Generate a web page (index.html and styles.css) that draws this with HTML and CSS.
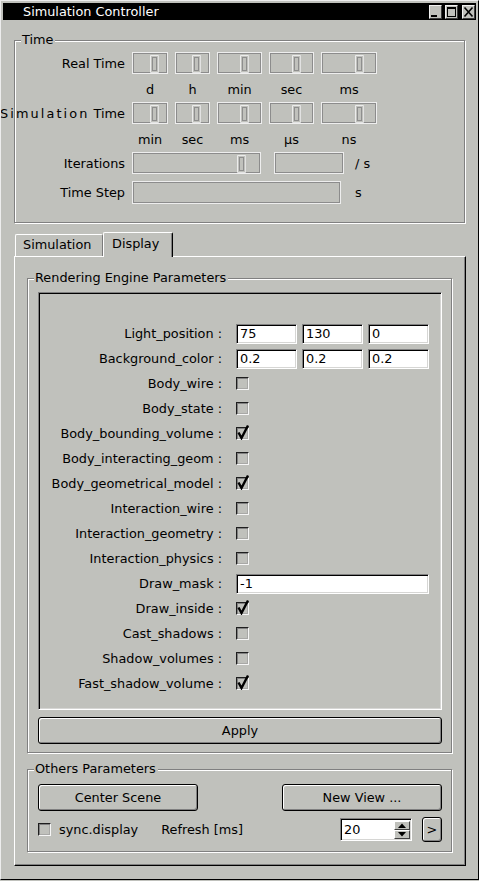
FILE: index.html
```html
<!DOCTYPE html>
<html>
<head>
<meta charset="utf-8">
<title>Simulation Controller</title>
<link rel="stylesheet" href="styles.css">
</head>
<body>
<div class="window">
  <div class="titlebar">
    <span class="title">Simulation Controller</span>
    <span class="wbtn"><svg width="11" height="12" viewBox="0 0 11 12"><rect x="1" y="9" width="6" height="2" fill="#000"/></svg></span>
    <span class="wbtn"><svg width="11" height="12" viewBox="0 0 11 12"><rect x="1.5" y="1.5" width="8" height="9" fill="none" stroke="#000"/><rect x="1" y="1" width="9" height="2" fill="#000"/></svg></span>
    <span class="wbtn"><svg width="11" height="12" viewBox="0 0 11 12"><path d="M1.5 1.5 L9.5 10.5 M9.5 1.5 L1.5 10.5" stroke="#000" stroke-width="1.6"/></svg></span>
  </div>

  <div class="client">
    <div class="group time">
      <span class="gtitle">Time</span>

      <div class="trow">
        <span class="tlabel">Real Time</span>
        <span class="lcd w36"><svg class="dg" width="9" height="18" viewBox="0 0 9 18"><path d="M0.5 17.5 V0.5 H8.5" fill="none" stroke="#ececec"/><path d="M8.5 0.5 V17.5 H0.5" fill="none" stroke="#e2e2e2"/><rect x="2.5" y="2.5" width="4" height="13" fill="none" stroke="#8e8e8e"/></svg></span>
        <span class="lcd w35"><svg class="dg" width="9" height="18" viewBox="0 0 9 18"><path d="M0.5 17.5 V0.5 H8.5" fill="none" stroke="#ececec"/><path d="M8.5 0.5 V17.5 H0.5" fill="none" stroke="#e2e2e2"/><rect x="2.5" y="2.5" width="4" height="13" fill="none" stroke="#8e8e8e"/></svg></span>
        <span class="lcd w45"><svg class="dg" width="9" height="18" viewBox="0 0 9 18"><path d="M0.5 17.5 V0.5 H8.5" fill="none" stroke="#ececec"/><path d="M8.5 0.5 V17.5 H0.5" fill="none" stroke="#e2e2e2"/><rect x="2.5" y="2.5" width="4" height="13" fill="none" stroke="#8e8e8e"/></svg></span>
        <span class="lcd w45"><svg class="dg" width="9" height="18" viewBox="0 0 9 18"><path d="M0.5 17.5 V0.5 H8.5" fill="none" stroke="#ececec"/><path d="M8.5 0.5 V17.5 H0.5" fill="none" stroke="#e2e2e2"/><rect x="2.5" y="2.5" width="4" height="13" fill="none" stroke="#8e8e8e"/></svg></span>
        <span class="lcd w56"><svg class="dg" width="9" height="18" viewBox="0 0 9 18"><path d="M0.5 17.5 V0.5 H8.5" fill="none" stroke="#ececec"/><path d="M8.5 0.5 V17.5 H0.5" fill="none" stroke="#e2e2e2"/><rect x="2.5" y="2.5" width="4" height="13" fill="none" stroke="#8e8e8e"/></svg></span>
      </div>
      <div class="urow">
        <span class="u w36">d</span><span class="u w35">h</span><span class="u w45">min</span><span class="u w45">sec</span><span class="u w56">ms</span>
      </div>

      <div class="trow">
        <span class="tlabel"><span class="spaced">Simulation</span>&nbsp;Time</span>
        <span class="lcd w36"><svg class="dg" width="9" height="18" viewBox="0 0 9 18"><path d="M0.5 17.5 V0.5 H8.5" fill="none" stroke="#ececec"/><path d="M8.5 0.5 V17.5 H0.5" fill="none" stroke="#e2e2e2"/><rect x="2.5" y="2.5" width="4" height="13" fill="none" stroke="#8e8e8e"/></svg></span>
        <span class="lcd w35"><svg class="dg" width="9" height="18" viewBox="0 0 9 18"><path d="M0.5 17.5 V0.5 H8.5" fill="none" stroke="#ececec"/><path d="M8.5 0.5 V17.5 H0.5" fill="none" stroke="#e2e2e2"/><rect x="2.5" y="2.5" width="4" height="13" fill="none" stroke="#8e8e8e"/></svg></span>
        <span class="lcd w45"><svg class="dg" width="9" height="18" viewBox="0 0 9 18"><path d="M0.5 17.5 V0.5 H8.5" fill="none" stroke="#ececec"/><path d="M8.5 0.5 V17.5 H0.5" fill="none" stroke="#e2e2e2"/><rect x="2.5" y="2.5" width="4" height="13" fill="none" stroke="#8e8e8e"/></svg></span>
        <span class="lcd w45"><svg class="dg" width="9" height="18" viewBox="0 0 9 18"><path d="M0.5 17.5 V0.5 H8.5" fill="none" stroke="#ececec"/><path d="M8.5 0.5 V17.5 H0.5" fill="none" stroke="#e2e2e2"/><rect x="2.5" y="2.5" width="4" height="13" fill="none" stroke="#8e8e8e"/></svg></span>
        <span class="lcd w56"><svg class="dg" width="9" height="18" viewBox="0 0 9 18"><path d="M0.5 17.5 V0.5 H8.5" fill="none" stroke="#ececec"/><path d="M8.5 0.5 V17.5 H0.5" fill="none" stroke="#e2e2e2"/><rect x="2.5" y="2.5" width="4" height="13" fill="none" stroke="#8e8e8e"/></svg></span>
      </div>
      <div class="urow">
        <span class="u w36">min</span><span class="u w35">sec</span><span class="u w45">ms</span><span class="u w45">µs</span><span class="u w56">ns</span>
      </div>

      <div class="trow iter">
        <span class="tlabel">Iterations</span>
        <span class="lcd w129"><svg class="dg" width="9" height="18" viewBox="0 0 9 18"><path d="M0.5 17.5 V0.5 H8.5" fill="none" stroke="#ececec"/><path d="M8.5 0.5 V17.5 H0.5" fill="none" stroke="#e2e2e2"/><rect x="2.5" y="2.5" width="4" height="13" fill="none" stroke="#8e8e8e"/></svg></span>
        <span class="lcd w70"></span>
        <span class="unit-after">/ s</span>
      </div>
      <div class="trow step">
        <span class="tlabel">Time Step</span>
        <span class="lcd w209"></span>
        <span class="unit-after s">s</span>
      </div>
    </div>

    <div class="tabs">
      <div class="tabbar">
        <div class="tab">Simulation</div>
        <div class="tab sel">Display</div>
      </div>
      <div class="panel">
        <div class="group render">
          <span class="gtitle">Rendering Engine Parameters</span>
          <div class="scroll">
            <div class="prow"><span class="plabel">Light_position :</span><span class="field">75</span><span class="field">130</span><span class="field">0</span></div>
            <div class="prow"><span class="plabel">Background_color :</span><span class="field">0.2</span><span class="field">0.2</span><span class="field">0.2</span></div>
            <div class="prow"><span class="plabel">Body_wire :</span><span class="cb"></span></div>
            <div class="prow"><span class="plabel">Body_state :</span><span class="cb"></span></div>
            <div class="prow"><span class="plabel">Body_bounding_volume :</span><span class="cb on"><svg class="tick" width="14" height="16" viewBox="0 0 14 16"><path d="M2.5 8.5 L5.5 14 L12 1.5" fill="none" stroke="#000" stroke-width="2.4"/></svg></span></div>
            <div class="prow"><span class="plabel">Body_interacting_geom :</span><span class="cb"></span></div>
            <div class="prow"><span class="plabel">Body_geometrical_model :</span><span class="cb on"><svg class="tick" width="14" height="16" viewBox="0 0 14 16"><path d="M2.5 8.5 L5.5 14 L12 1.5" fill="none" stroke="#000" stroke-width="2.4"/></svg></span></div>
            <div class="prow"><span class="plabel">Interaction_wire :</span><span class="cb"></span></div>
            <div class="prow"><span class="plabel">Interaction_geometry :</span><span class="cb"></span></div>
            <div class="prow"><span class="plabel">Interaction_physics :</span><span class="cb"></span></div>
            <div class="prow"><span class="plabel">Draw_mask :</span><span class="field wide">-1</span></div>
            <div class="prow"><span class="plabel">Draw_inside :</span><span class="cb on"><svg class="tick" width="14" height="16" viewBox="0 0 14 16"><path d="M2.5 8.5 L5.5 14 L12 1.5" fill="none" stroke="#000" stroke-width="2.4"/></svg></span></div>
            <div class="prow"><span class="plabel">Cast_shadows :</span><span class="cb"></span></div>
            <div class="prow"><span class="plabel">Shadow_volumes :</span><span class="cb"></span></div>
            <div class="prow"><span class="plabel">Fast_shadow_volume :</span><span class="cb on"><svg class="tick" width="14" height="16" viewBox="0 0 14 16"><path d="M2.5 8.5 L5.5 14 L12 1.5" fill="none" stroke="#000" stroke-width="2.4"/></svg></span></div>
          </div>
          <div class="btn apply">Apply</div>
        </div>

        <div class="group others">
          <span class="gtitle">Others Parameters</span>
          <div class="orow">
            <div class="btn wide-btn">Center Scene</div>
            <div class="btn wide-btn">New View ...</div>
          </div>
          <div class="orow second">
            <span class="cb"></span>
            <span class="sync">sync.display</span>
            <span class="refresh">Refresh [ms]</span>
            <span class="spin">
              <span class="spin-val">20</span>
              <span class="spin-btns">
                <span class="sb"><svg width="10" height="7" viewBox="0 0 10 7"><path d="M1 6 L5 1.5 L9 6 Z" fill="#000"/></svg></span>
                <span class="sb"><svg width="10" height="7" viewBox="0 0 10 7"><path d="M1 1 L5 5.5 L9 1 Z" fill="#000"/></svg></span>
              </span>
            </span>
            <div class="btn small">&gt;</div>
          </div>
        </div>
      </div>
    </div>
  </div>
</div>
</body>
</html>
```

FILE: styles.css
```css
* { box-sizing: border-box; }

html, body {
  margin: 0;
  padding: 0;
  background: #c0c1bc;
}

body {
  font-family: "DejaVu Sans", "Noto Sans", sans-serif;
  font-size: 12.85px;
  color: #000;
}

.window {
  width: 479px;
  height: 880px;
  border: 1px solid;
  border-color: #ededed #000 #000 #ededed;
  padding: 2px 2px 0 2px;
  background: #c0c1bc;
  overflow: hidden;
}

/* ---------- title bar ---------- */
.titlebar {
  height: 17px;
  background: #000;
  color: #fff;
  display: flex;
  align-items: center;
  padding-left: 20px;
  padding-right: 1px;
}
.title {
  flex: 1;
  line-height: 17px;
}
.wbtn {
  width: 13px;
  height: 14px;
  background: #c0c1bc;
  border: 1px solid;
  border-color: #f2f2f2 #3a3a3a #3a3a3a #f2f2f2;
  display: flex;
  margin-left: 3px;
}
.wbtn:last-child { margin-left: 4px; }
.wbtn svg { display: block; }

/* ---------- client ---------- */
.client {
  padding-left: 11px;
  padding-top: 20px;
}

.group {
  position: relative;
  border: 1px solid #808080;
  box-shadow: 1px 1px 0 #fff, inset 1px 1px 0 #fff;
}
.gtitle {
  position: absolute;
  top: -8px;
  left: 6px;
  padding: 0 2px 0 1px;
  line-height: 14px;
  background: #c0c1bc;
  white-space: nowrap;
}

/* ---------- time group ---------- */
.time {
  width: 451px;
  padding: 11px 0 18px 0;
}
.trow {
  display: flex;
  align-items: center;
  height: 22px;
}
.trow.iter { margin-bottom: 7px; }
.trow.step { height: 23px; }
.tlabel {
  width: 110px;
  flex: none;
  display: flex;
  justify-content: flex-end;
  white-space: nowrap;
  margin-right: 7px;
}
.spaced { letter-spacing: 2.1px; }
.lcd {
  flex: none;
  height: 22px;
  border: 1px solid #eeeeee;
  box-shadow: inset 0 0 0 1px #8c8c8c;
  display: flex;
  align-items: center;
  margin-right: 7px;
}
.trow.step .lcd { height: 23px; }
.lcd .dg { display: block; flex: none; margin-top: 1px; }
.w36 { width: 36px; }
.w35 { width: 35px; }
.w45 { width: 45px; }
.w56 { width: 56px; }
.w129 { width: 129px; margin-right: 13px; }
.w70 { width: 70px; margin-right: 11px; }
.w209 { width: 209px; margin-right: 14px; }
.lcd.w36 .dg { margin-left: 17px; }
.lcd.w35 .dg { margin-left: 16px; }
.lcd.w45 .dg { margin-left: 22px; }
.lcd.w56 .dg { margin-left: 33px; }
.lcd.w129 .dg { margin-left: 104px; }

.urow {
  display: flex;
  height: 28px;
  padding-top: 3px;
  padding-left: 117px;
  align-items: center;
}
.u {
  flex: none;
  text-align: center;
  margin-right: 7px;
}

/* ---------- tabs ---------- */
.tabs { margin-top: 9px; }
.tabbar {
  display: flex;
  align-items: flex-end;
  height: 24px;
  padding-left: 1px;
}
.tab {
  height: 22px;
  width: 88px;
  border-top: 1px solid #fff;
  border-left: 1px solid #fff;
  border-right: 1px solid #7a7a7a;
  border-top-left-radius: 2px;
  border-top-right-radius: 2px;
  padding-left: 7px;
  line-height: 20px;
  white-space: nowrap;
}
.tab.sel {
  position: relative;
  z-index: 1;
  width: 70px;
  height: 25px;
  margin-bottom: -1px;
  padding-left: 8px;
  line-height: 21px;
  border-right: 1px solid #000;
  box-shadow: inset -1px 0 0 #808080;
  background: #c0c1bc;
}

.panel {
  width: 452px;
  height: 610px;
  border-top: 1px solid #fff;
  border-left: 1px solid #fff;
  border-right: 1px solid #000;
  border-bottom: 1px solid #000;
  box-shadow: inset -1px -1px 0 #808080;
  padding: 21px 0 0 12px;
}

/* ---------- rendering group ---------- */
.render {
  width: 425px;
  padding: 13px 0 8px 10px;
}
.scroll {
  width: 404px;
  height: 418px;
  border: 1px solid;
  border-color: #808080 #fff #fff #808080;
  box-shadow: inset 1px 1px 0 #000, inset -1px -1px 0 #d6d6d4;
  padding-top: 28px;
}
.prow {
  display: flex;
  align-items: center;
  height: 25px;
}
.plabel {
  flex: none;
  width: 183px;
  text-align: right;
  white-space: nowrap;
  margin-right: 14px;
}
.field {
  flex: none;
  width: 61px;
  height: 20px;
  margin-right: 5px;
  background: #fff;
  border: 1px solid;
  border-color: #808080 #fff #fff #808080;
  box-shadow: inset 1px 1px 0 #000, inset -1px -1px 0 #d6d6d4;
  padding-left: 3px;
  line-height: 18px;
  white-space: nowrap;
}
.field.wide { width: 193px; }

.cb {
  position: relative;
  flex: none;
  width: 13px;
  height: 13px;
  border: 1px solid;
  border-color: #1e1e1e #f6f6f6 #f6f6f6 #1e1e1e;
  box-shadow: inset 1px 1px 0 #808080, inset -1px -1px 0 #a8a8a6;
  background: #c0c1bc;
}
.cb .tick {
  position: absolute;
  left: -1px;
  top: -4px;
  display: block;
}

.btn {
  border: 1px solid #000;
  border-radius: 3px;
  box-shadow: inset 1px 1px 0 #fff, inset -1px -1px 0 #808080;
  background: #c0c1bc;
  display: flex;
  align-items: center;
  justify-content: center;
  white-space: nowrap;
}
.apply {
  width: 404px;
  height: 27px;
  margin-top: 7px;
}

/* ---------- others group ---------- */
.others {
  width: 425px;
  margin-top: 16px;
  padding: 14px 0 9px 10px;
}
.orow {
  width: 404px;
  display: flex;
  justify-content: space-between;
}
.wide-btn {
  width: 160px;
  height: 27px;
}
.orow.second {
  margin-top: 6px;
  height: 25px;
  justify-content: flex-start;
  align-items: center;
}
.sync { margin-left: 8px; }
.refresh { margin-left: 23px; }
.spin {
  margin-left: auto;
  width: 72px;
  height: 23px;
  display: flex;
  background: #fff;
  border: 1px solid;
  border-color: #808080 #fff #fff #808080;
  box-shadow: inset 1px 1px 0 #000, inset -1px -1px 0 #d6d6d4;
  padding: 2px 1px 1px 3px;
}
.spin-val {
  flex: 1;
  line-height: 18px;
}
.spin-btns {
  width: 16px;
  display: flex;
  flex-direction: column;
}
.sb {
  flex: 1;
  background: #c0c1bc;
  border: 1px solid;
  border-color: #fff #404040 #404040 #fff;
  display: flex;
  align-items: center;
  justify-content: center;
}
.sb svg { display: block; }
.btn.small {
  width: 20px;
  height: 25px;
  margin-left: 10px;
}
```
